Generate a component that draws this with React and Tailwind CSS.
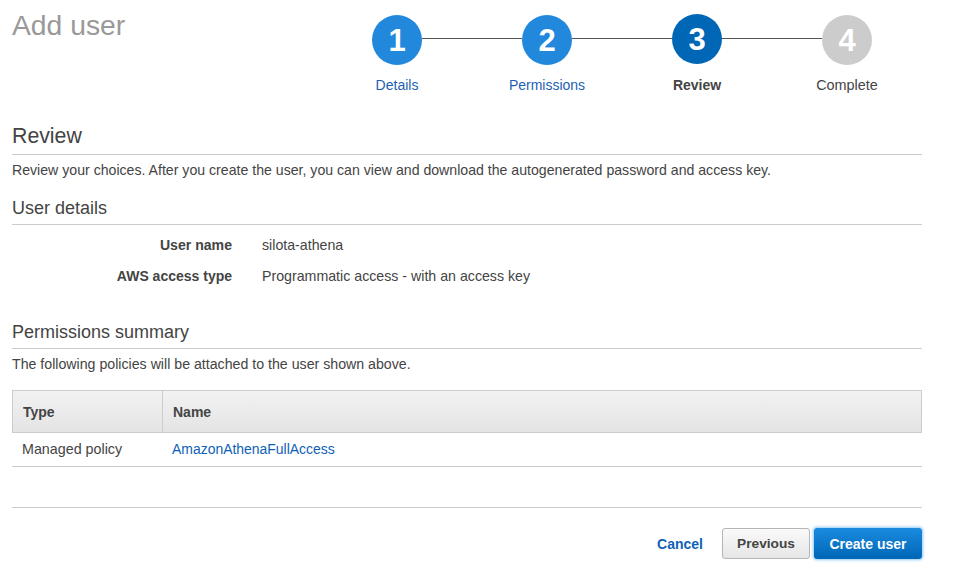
const steps = [
  { num: 1, label: "Details", circle: "bg-[#2188dc] mt-[15px]", text: "text-[14px] text-[#1d5fb0]" },
  { num: 2, label: "Permissions", circle: "bg-[#2188dc] mt-[15px]", text: "text-[14px] text-[#1d5fb0]" },
  { num: 3, label: "Review", circle: "bg-[#0066b6] mt-[14px] mb-px", text: "text-[14px] text-[#444] font-bold" },
  { num: 4, label: "Complete", circle: "bg-[#cccccc] mt-[15px]", text: "text-[14.4px] text-[#444]" },
];

const Stepper = () => (
  <div className="grid grid-cols-4 w-[600px]">
    {steps.map((step, i) => (
      <div key={step.num} className="relative flex flex-col items-center">
        {i < steps.length - 1 && (
          <div className="absolute top-[38px] left-[100px] w-[100px] h-px bg-[#555]"></div>
        )}
        <div
          className={`w-[50px] h-[50px] rounded-full flex items-center justify-center text-white text-[31px] font-bold leading-none ${step.circle}`}
        >
          {step.num}
        </div>
        <div className={`mt-[12px] leading-[16px] ${step.text}`}>{step.label}</div>
      </div>
    ))}
  </div>
);

const SectionTitle = ({ className = "", children }) => (
  <h2 className={`border-b border-[#cccccc] text-[#444] ${className}`}>{children}</h2>
);

export default function App() {
  return (
    <div className="w-[957px] h-[585px] bg-white pl-3 pr-[35px] overflow-hidden font-['Liberation_Sans',Arial,sans-serif] text-[14px] text-[#444]">
      <div className="flex justify-between h-[123px]">
        <h1 className="mt-[9px] text-[28.3px] leading-[32px] text-[#999]">Add user</h1>
        <Stepper />
      </div>

      <SectionTitle className="text-[21.3px] leading-[26px] pb-[5px]">Review</SectionTitle>
      <p className="mt-[7px] leading-[16px] text-[14.13px]">
        Review your choices. After you create the user, you can view and download the autogenerated password and access key.
      </p>

      <SectionTitle className="mt-[20px] text-[18px] leading-[20px] pb-[6px]">User details</SectionTitle>
      <div className="mt-[12px] grid grid-cols-[220px_1fr] gap-x-[30px] gap-y-[15px] leading-[16px]">
        <div className="text-right font-bold text-[14.1px]">User name</div>
        <div className="text-[14.2px]">silota-athena</div>
        <div className="text-right font-bold">AWS access type</div>
        <div className="text-[14.2px]">Programmatic access - with an access key</div>
      </div>

      <SectionTitle className="mt-[38px] text-[18px] leading-[20px] pb-[6px]">Permissions summary</SectionTitle>
      <p className="mt-[7px] leading-[16px] text-[14.18px]">The following policies will be attached to the user shown above.</p>

      <div className="mt-[18px] border-b border-[#cccccc]">
        <div className="grid grid-cols-[150px_1fr] h-[43px] border border-[#cccccc] bg-gradient-to-b from-[#f2f2f2] to-[#e4e4e4] font-bold">
          <div className="flex items-center pl-[10px] pt-px border-r border-[#cccccc]">Type</div>
          <div className="flex items-center pl-[10px] pt-px">Name</div>
        </div>
        <div className="grid grid-cols-[160px_1fr] h-[33px] items-center">
          <div className="pl-[10px] text-[14.3px]">Managed policy</div>
          <a className="text-[#0f5fb5] text-[13.95px]">AmazonAthenaFullAccess</a>
        </div>
      </div>

      <div className="mt-[40px] border-t border-[#cccccc] pt-[20px] flex justify-end items-center">
        <a className="font-bold text-[#0f5fb5] mr-[19px] pt-px">Cancel</a>
        <button className="w-[88px] h-[31px] mr-[4px] pt-[2px] rounded-[3px] border border-[#b5b5b5] bg-gradient-to-b from-[#fafafa] to-[#e6e6e6] font-bold text-[13.7px] text-[#444]">
          Previous
        </button>
        <button className="w-[108px] h-[31px] pt-[2px] rounded-[3px] bg-gradient-to-b from-[#1a8be0] to-[#0066b6] font-bold text-white shadow-[0_0_3px_1px_#8cc8f5]">
          Create user
        </button>
      </div>
    </div>
  );
}
